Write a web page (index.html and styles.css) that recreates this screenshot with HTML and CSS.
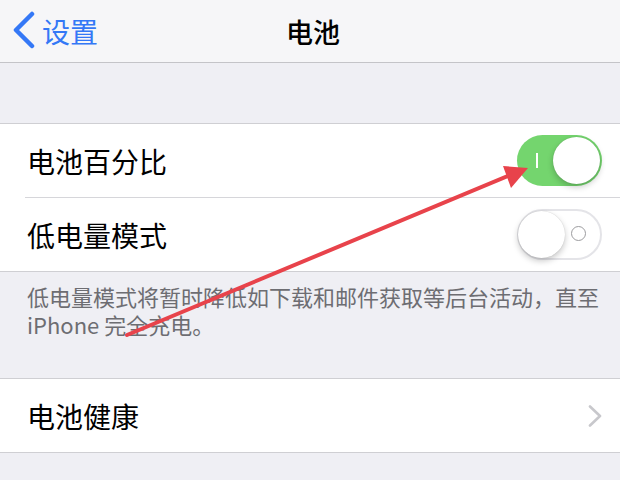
FILE: index.html
```html
<!DOCTYPE html>
<html lang="zh-CN">
<head>
  <meta charset="UTF-8"/>
  <meta name="viewport" content="width=device-width, initial-scale=1.0"/>
  <title>电池</title>
  <link rel="stylesheet" href="styles.css">
</head>
<body>
  <div class="navbar">
    <div class="back">
      <svg class="back-icon" width="26" height="38" viewBox="0 0 26 38"><path d="M21 3 L5 19 L21 35" fill="none" stroke="#3478f6" stroke-width="4.5" stroke-linecap="round" stroke-linejoin="round"/></svg>
      <span>设置</span>
    </div>
    <div class="title">电池</div>
  </div>

  <div class="spacer"></div>

  <div class="group">
    <div class="row">
      <span class="label">电池百分比</span>
      <div class="switch on"><span class="mark-i"></span><span class="knob"></span></div>
    </div>
    <div class="row">
      <span class="label">低电量模式</span>
      <div class="switch off"><span class="knob"></span><span class="mark-o"></span></div>
    </div>
  </div>

  <div class="footer">低电量模式将暂时降低如下载和邮件获取等后台活动，直至iPhone 完全充电。</div>

  <div class="group">
    <div class="row">
      <span class="label">电池健康</span>
      <svg class="chevron" width="14" height="22" viewBox="0 0 14 22"><path d="M2 1.5 L12 11 L2 20.5" fill="none" stroke="#c8c8cc" stroke-width="2.6" stroke-linecap="round" stroke-linejoin="round"/></svg>
    </div>
  </div>

  <svg class="arrow" width="620" height="480" viewBox="0 0 620 480">
    <line x1="127" y1="335" x2="510" y2="175" stroke="#e8434b" stroke-width="4" stroke-linecap="round"/>
    <polygon points="528,168 503,166 511,188" fill="#e8434b"/>
  </svg>
</body>
</html>
```

FILE: styles.css
```css
body { margin:0; background:#efeff4; font-family:"Noto Sans CJK SC", "Noto Sans", sans-serif; color:#000; width:620px; height:480px; overflow:hidden; position:relative; }

.navbar { height:62px; background:#f6f6f8; border-bottom:1px solid #c4c4c8; position:relative; display:flex; align-items:center; }
.back { display:flex; align-items:center; gap:5px; padding-left:11px; color:#3478f6; font-size:28px; }
.back-icon { margin-top:-2px; }
.title { position:absolute; left:0; right:0; top:0; height:62px; display:flex; align-items:center; justify-content:center; font-size:27px; font-weight:500; pointer-events:none; padding-left:6px; }

.spacer { height:60px; }

.group { background:#fff; border-top:1px solid #cfcfd3; border-bottom:1px solid #cfcfd3; }
.row { height:73px; display:flex; align-items:center; justify-content:space-between; padding:0 18px 0 27px; position:relative; }
.row + .row { border-top:1px solid #d6d6da; margin-left:25px; padding-left:2px; }
.label { font-size:28px; line-height:1; }

.switch { width:85px; height:51px; border-radius:26px; box-sizing:border-box; position:relative; display:flex; align-items:center; }
.switch.on { background:#74d56e; justify-content:flex-end; padding-right:2px; }
.switch.off { background:#fff; border:2px solid #e4e4e8; padding-left:0; }
.knob { width:47px; height:47px; border-radius:50%; background:#fff; box-shadow:0 3px 6px rgba(0,0,0,0.22), 0 0 1px rgba(0,0,0,0.2); }
.switch.off .knob { margin-left:-1px; }
.mark-i { position:absolute; left:19px; top:18px; width:2px; height:15px; background:#fff; }
.mark-o { position:absolute; right:14px; top:15px; width:13px; height:13px; border:1.6px solid #9c9c9f; border-radius:50%; }

.footer { font-size:22px; line-height:28px; color:#6d6d72; padding:10px 12px 0 27px; height:96px; }

.arrow { position:absolute; left:0; top:0; pointer-events:none; }
```
